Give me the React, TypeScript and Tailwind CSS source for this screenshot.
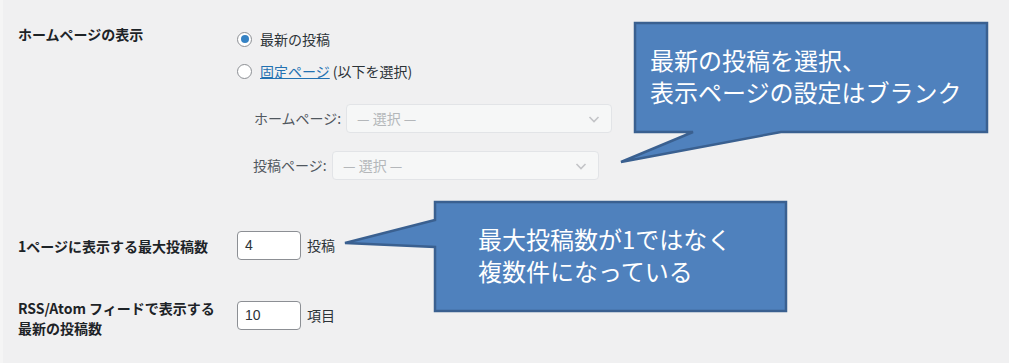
import React from "react";

const font = { fontFamily: '"Noto Sans CJK JP", "Noto Sans", sans-serif' };

function Chevron() {
  return (
    <svg width="14" height="14" viewBox="0 0 14 14" fill="none">
      <path d="M2.5 5 L7 9.5 L11.5 5" stroke="#c3c4c7" strokeWidth="1.6" />
    </svg>
  );
}

function Select({ w }: { w: string }) {
  return (
    <div
      className={`${w} h-[29px] flex items-center justify-between pl-[10px] pr-[10px] rounded-[4px] border border-[#e2e4e7] bg-[#f6f7f7] text-[14px] text-[#b4b7ba]`}
    >
      <span>— 選択 —</span>
      <Chevron />
    </div>
  );
}

function Radio({ checked }: { checked?: boolean }) {
  return (
    <span className="w-[15px] h-[15px] rounded-full border border-[#8c8f94] bg-white flex items-center justify-center shrink-0">
      {checked && <span className="w-[8px] h-[8px] rounded-full bg-[#3582c4]" />}
    </span>
  );
}

function NumInput({ v }: { v: string }) {
  return (
    <div
      className="w-[64px] h-[29px] rounded-[4px] border border-[#8c8f94] bg-white flex items-center pl-[7px] text-[14px] text-[#2c3338]"
      style={{ fontFamily: '"Liberation Sans", Arial, sans-serif' }}
    >
      {v}
    </div>
  );
}

export default function App() {
  return (
    <div
      className="relative w-[1009px] h-[363px] overflow-hidden bg-[#f0f0f1] border-l-[3px] border-[#f5f5f5] pl-[15px] text-[#1d2327] text-[14px]"
      style={font}
    >
      {/* Row 1 */}
      <div className="flex pt-[24px]">
        <div className="w-[219px] font-bold leading-[20px]">ホームページの表示</div>
        <div className="flex flex-col pt-[5px]">
          <div className="flex items-center h-[20px] gap-[8px] text-[#2c3338]">
            <Radio checked />
            <span>最新の投稿</span>
          </div>
          <div className="flex items-center h-[20px] gap-[8px] mt-[12px] text-[#2c3338]">
            <Radio />
            <span>
              <span className="text-[#2271b1] underline">固定ページ</span> (以下を選択)
            </span>
          </div>
          <div className="flex items-center mt-[23px] pl-[17px] text-[#50575e]">
            <span className="w-[92px]">ホームページ:</span>
            <Select w="w-[266px]" />
          </div>
          <div className="flex items-center mt-[18px] pl-[16px] text-[#50575e]">
            <span className="w-[79px]">投稿ページ:</span>
            <Select w="w-[267px]" />
          </div>
        </div>
      </div>

      {/* Row 2 */}
      <div className="flex items-center mt-[51px] h-[29px]">
        <div className="w-[219px] font-bold leading-[20px]">1ページに表示する最大投稿数</div>
        <NumInput v="4" />
        <span className="ml-[6px] text-[#2c3338]">投稿</span>
      </div>

      {/* Row 3 */}
      <div className="flex items-start mt-[38px]">
        <div className="w-[219px] font-bold leading-[20px]">
          RSS/Atom フィードで表示する
          <br />
          最新の投稿数
        </div>
        <div className="flex items-center mt-[3px]">
          <NumInput v="10" />
          <span className="ml-[6px] text-[#2c3338]">項目</span>
        </div>
      </div>

      {/* Callout shapes */}
      <svg className="absolute left-0 top-0" width="1009" height="363" viewBox="0 0 1009 363">
        <path
          d="M632 23 L984 23 L984 132 L778 132 L618 162 L690 132 L632 132 Z"
          fill="#4f81bd"
          stroke="#3a6090"
          strokeWidth="2.5"
          strokeLinejoin="miter"
        />
        <path
          d="M432 202 L783 202 L783 311 L432 311 L432 247 L342 243 L432 220 Z"
          fill="#4f81bd"
          stroke="#3a6090"
          strokeWidth="2.5"
          strokeLinejoin="miter"
        />
      </svg>
      <div className="absolute left-[647px] top-[44px] text-white text-[24px] leading-[32px]">
        最新の投稿を選択、
        <br />
        表示ページの設定はブランク
      </div>
      <div className="absolute left-[475px] top-[223px] text-white text-[24px] leading-[32px]">
        最大投稿数が1ではなく
        <br />
        複数件になっている
      </div>
    </div>
  );
}
